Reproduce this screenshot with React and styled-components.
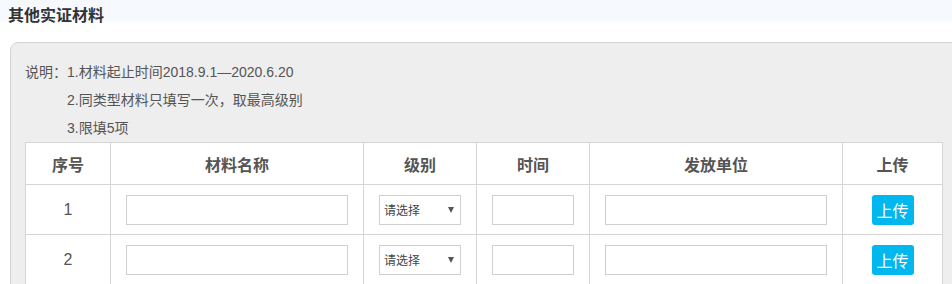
import React from 'react';
import styled, { createGlobalStyle } from 'styled-components';

const GlobalStyle = createGlobalStyle`
  html, body {
    margin: 0;
    padding: 0;
    overflow: hidden;
    background: linear-gradient(#f5f9fd 0, #f7fafd 20px, #ffffff 24px);
    font-family: "Liberation Sans", "Noto Sans CJK SC", sans-serif;
  }
`;

const Page = styled.div`
  width: 952px;
  height: 284px;
  overflow: hidden;
`;

const Title = styled.h3`
  margin: 0;
  padding: 6px 0 0 8px;
  height: 42px;
  box-sizing: border-box;
  font-size: 16px;
  line-height: 20px;
  font-weight: bold;
  color: #333;
`;

const Panel = styled.div`
  margin-left: 10px;
  width: 980px;
  min-height: 260px;
  box-sizing: border-box;
  padding: 15px 0 0 14px;
  background: #eeeeee;
  border: 1px solid #d3d3d3;
  border-radius: 8px 0 0 0;
`;

const Note = styled.div`
  font-size: 14px;
  line-height: 28px;
  color: #555;
`;

const NoteLine = styled.div`
  padding-left: ${(p) => (p.$indent ? '42px' : '0')};
`;

const Table = styled.table`
  border-collapse: collapse;
  background: #fff;
  table-layout: fixed;
`;

const Th = styled.th`
  width: ${(p) => p.$w}px;
  height: 41px;
  padding: 0;
  border: 1px solid #d5d5d5;
  font-size: 16px;
  font-weight: bold;
  color: #555;
  text-align: center;
`;

const Td = styled.td`
  height: 49px;
  padding: 0;
  border: 1px solid #d5d5d5;
  font-size: 16px;
  color: #555;
  text-align: center;
  vertical-align: middle;
`;

const TextInput = styled.input`
  display: block;
  margin: 0 auto;
  width: ${(p) => p.$w}px;
  height: 30px;
  box-sizing: border-box;
  border: 1px solid #cfcfcf;
  background: #fff;
  outline: none;
`;

const SelectWrap = styled.div`
  position: relative;
  margin: 0 auto;
  width: 82px;
  height: 30px;
`;

const Select = styled.select`
  appearance: none;
  width: 100%;
  height: 100%;
  box-sizing: border-box;
  border: 1px solid #cfcfcf;
  background: #fff;
  padding: 0 0 0 4px;
  font-family: "Noto Sans CJK SC", sans-serif;
  font-size: 12px;
  color: #444;
  outline: none;
`;

const Arrow = styled.span`
  position: absolute;
  right: 7px;
  top: 12px;
  width: 0;
  height: 0;
  border-left: 3px solid transparent;
  border-right: 3px solid transparent;
  border-top: 6px solid #555;
  pointer-events: none;
`;

const UploadButton = styled.button`
  width: 42px;
  height: 30px;
  padding: 0;
  border: none;
  border-radius: 3px;
  background: #00b7ee;
  color: #fff;
  font-family: "Noto Sans CJK SC", sans-serif;
  font-size: 16px;
  cursor: pointer;
`;

const columns = [
  { name: '序号', w: 84 },
  { name: '材料名称', w: 252 },
  { name: '级别', w: 112 },
  { name: '时间', w: 112 },
  { name: '发放单位', w: 252 },
  { name: '上传', w: 99 },
];

function Row({ index }) {
  return (
    <tr>
      <Td>{index}</Td>
      <Td>
        <TextInput $w={222} />
      </Td>
      <Td>
        <SelectWrap>
          <Select defaultValue="">
            <option value="">请选择</option>
            <option value="1">国家级</option>
            <option value="2">省级</option>
            <option value="3">市级</option>
          </Select>
          <Arrow />
        </SelectWrap>
      </Td>
      <Td>
        <TextInput $w={82} />
      </Td>
      <Td>
        <TextInput $w={222} />
      </Td>
      <Td>
        <UploadButton>上传</UploadButton>
      </Td>
    </tr>
  );
}

export default function App() {
  return (
    <Page>
      <GlobalStyle />
      <Title>其他实证材料</Title>
      <Panel>
        <Note>
          <NoteLine>说明：1.材料起止时间2018.9.1—2020.6.20</NoteLine>
          <NoteLine $indent>2.同类型材料只填写一次，取最高级别</NoteLine>
          <NoteLine $indent>3.限填5项</NoteLine>
        </Note>
        <Table>
          <thead>
            <tr>
              {columns.map((col) => (
                <Th key={col.name} $w={col.w}>
                  {col.name}
                </Th>
              ))}
            </tr>
          </thead>
          <tbody>
            {[1, 2].map((i) => (
              <Row key={i} index={i} />
            ))}
          </tbody>
        </Table>
      </Panel>
    </Page>
  );
}
